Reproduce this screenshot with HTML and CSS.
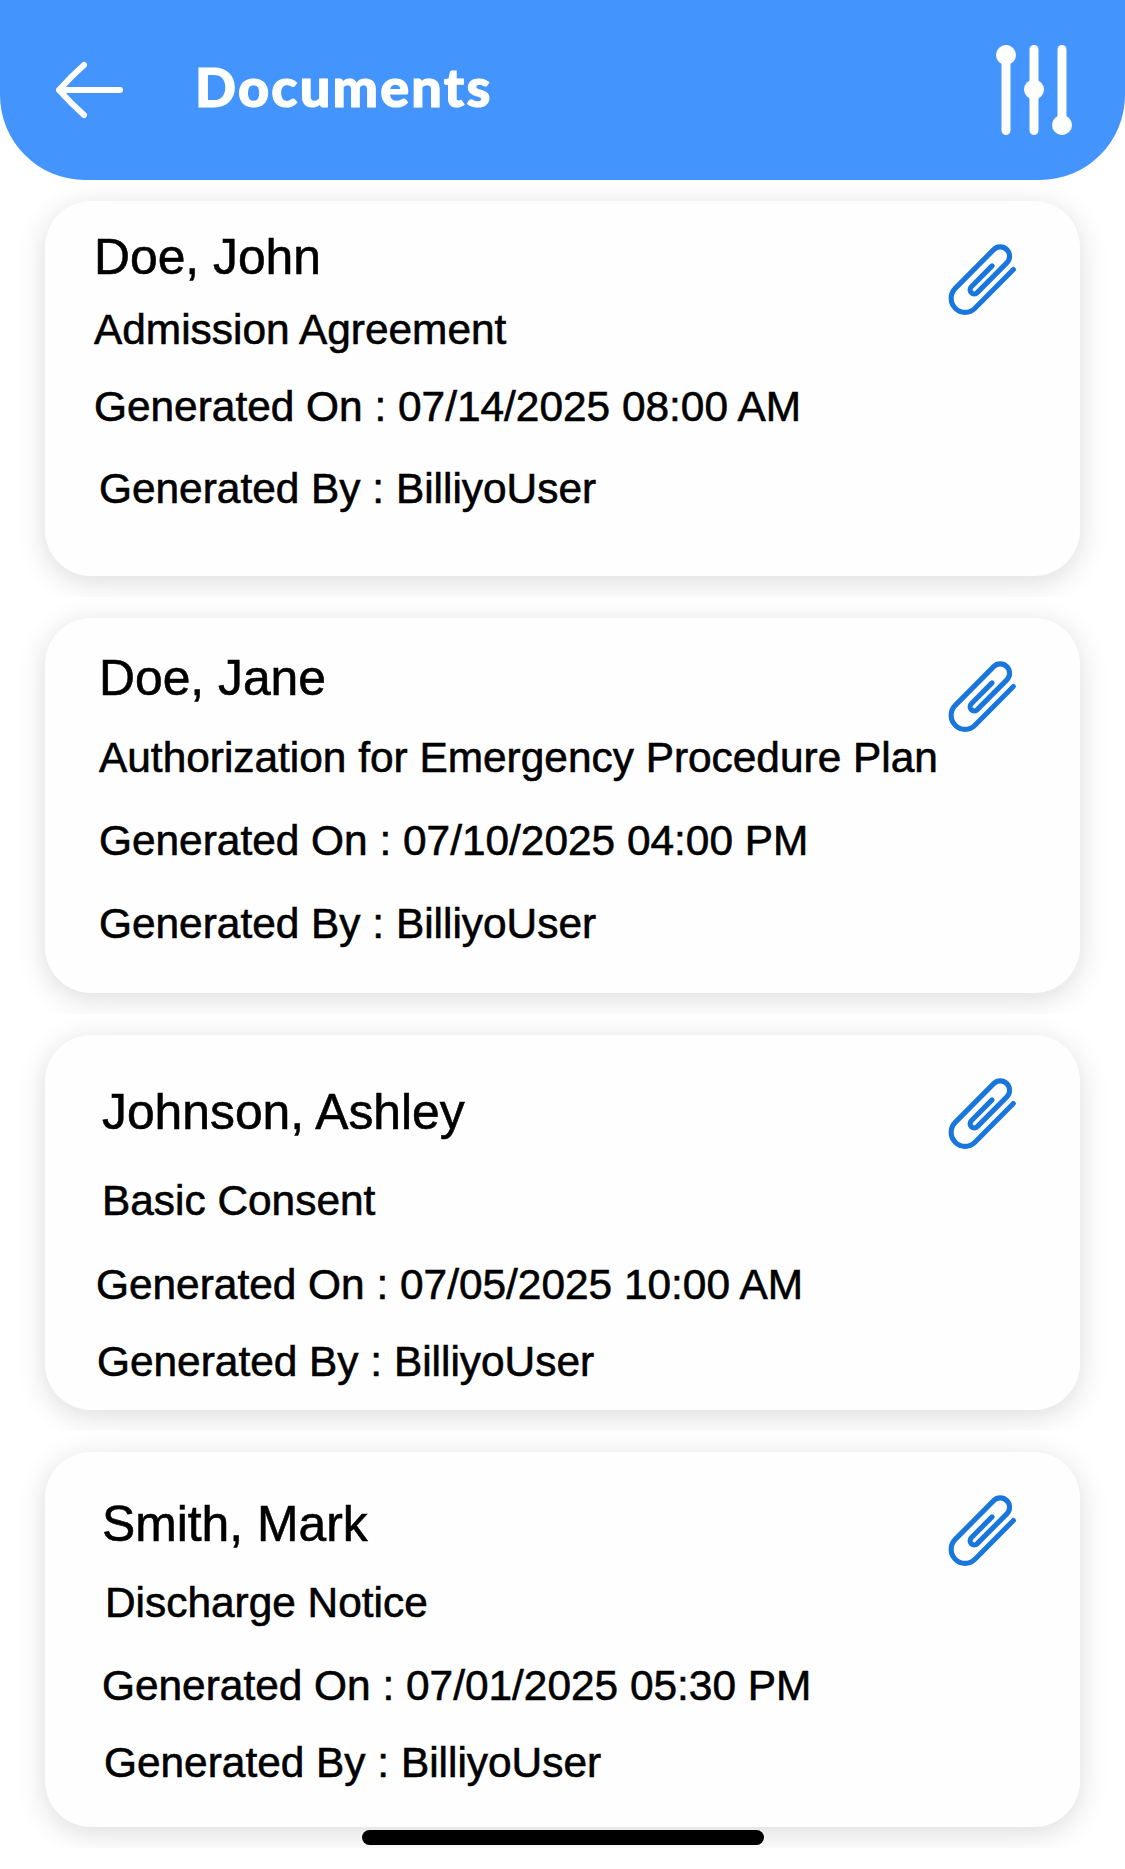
FILE: index.html
```html
<!DOCTYPE html>
<html lang="en">
<head>
    <meta charset="UTF-8">
    <title>Documents</title>
    <link rel="stylesheet" href="styles.css">
</head>
<body>
    <!-- shared icon -->
    <svg class="sprite" width="0" height="0">
        <symbol id="clip" viewBox="84 72 210 216" preserveAspectRatio="none">
            <path d="M218 138L155 201A12.7 12.7 0 0 0 173 219L263 129A28 28 0 0 0 223 89L106 206A42 42 0 0 0 166 266L283 149" fill="none" stroke="currentColor" stroke-width="15.5" stroke-linecap="round"/>
        </symbol>
    </svg>

    <header class="header">
        <svg class="back-icon" viewBox="0 0 70 60" fill="none" stroke="#fff" stroke-width="6" stroke-linecap="round" stroke-linejoin="round">
            <path d="M30 5C22 12 13 21 5 30C13 39 22 48 30 55M5 30H66"/>
        </svg>
        <h1 class="title">Documents</h1>
        <svg class="filter-icon" viewBox="0 0 78 92" fill="#fff">
            <rect x="6.5" y="1" width="9" height="90" rx="4.5"/>
            <rect x="34.5" y="1" width="9" height="90" rx="4.5"/>
            <rect x="62.5" y="1" width="9" height="90" rx="4.5"/>
            <circle cx="11" cy="11" r="10"/>
            <circle cx="39" cy="45.5" r="10"/>
            <circle cx="67" cy="81" r="10"/>
        </svg>
    </header>

    <main class="list">
        <div class="cell">
            <div class="card card-admission">
                <div class="info">
                    <h2 class="name">Doe, John</h2>
                    <p class="type">Admission Agreement</p>
                    <p class="date">Generated On : 07/14/2025 08:00 AM</p>
                    <p class="user">Generated By : BilliyoUser</p>
                </div>
                <svg class="clip-icon"><use href="#clip"/></svg>
            </div>
        </div>
        <div class="cell">
            <div class="card card-authorization">
                <div class="info">
                    <h2 class="name">Doe, Jane</h2>
                    <p class="type">Authorization for Emergency Procedure Plan</p>
                    <p class="date">Generated On : 07/10/2025 04:00 PM</p>
                    <p class="user">Generated By : BilliyoUser</p>
                </div>
                <svg class="clip-icon"><use href="#clip"/></svg>
            </div>
        </div>
        <div class="cell">
            <div class="card card-consent">
                <div class="info">
                    <h2 class="name">Johnson, Ashley</h2>
                    <p class="type">Basic Consent</p>
                    <p class="date">Generated On : 07/05/2025 10:00 AM</p>
                    <p class="user">Generated By : BilliyoUser</p>
                </div>
                <svg class="clip-icon"><use href="#clip"/></svg>
            </div>
        </div>
        <div class="cell">
            <div class="card card-discharge">
                <div class="info">
                    <h2 class="name">Smith, Mark</h2>
                    <p class="type">Discharge Notice</p>
                    <p class="date">Generated On : 07/01/2025 05:30 PM</p>
                    <p class="user">Generated By : BilliyoUser</p>
                </div>
                <svg class="clip-icon"><use href="#clip"/></svg>
            </div>
        </div>
    </main>

    <div class="home-indicator"></div>
</body>
</html>
```

FILE: styles.css
```css
* {
    box-sizing: border-box;
}
body {
    margin: 0;
    height: 1869px;
    background-color: #fff;
    color: #000;
    font-family: "Liberation Sans", Arial, sans-serif;
    overflow: hidden;
}
h1, h2, p {
    margin: 0;
    font-weight: normal;
}
.sprite {
    display: block;
}

/* header */
.header {
    display: flex;
    align-items: center;
    height: 180px;
    padding: 0 52px 0 54px;
    background-color: #4394fc;
    border-radius: 0 0 85px 85px;
}
.back-icon {
    width: 70px;
    height: 60px;
}
.title {
    flex: 1;
    margin-left: 71px;
    padding-bottom: 6px;
    color: #fff;
    font-family: Lato, sans-serif;
    font-size: 54px;
    font-weight: 900;
    line-height: 64px;
    letter-spacing: 2.2px;
    -webkit-text-stroke: 1.2px #fff;
}
.filter-icon {
    width: 78px;
    height: 92px;
}

/* document list */
.cell {
    height: 417px;
    padding: 21px 45px;
    overflow: hidden;
}
.card {
    display: flex;
    justify-content: space-between;
    height: 375px;
    padding: 0 63px 0 48px;
    background-color: #fefefe;
    border-radius: 46px;
    box-shadow: 0 6px 30px rgba(0, 0, 0, 0.14);
}
.clip-icon {
    flex: none;
    width: 69px;
    height: 71.5px;
    margin-top: 43px;
    color: #1876dd;
}
.info {
    font-size: 42.4px;
    line-height: 50px;
    white-space: nowrap;
    -webkit-text-stroke: 0.6px #000;
}
.name {
    font-size: 49.8px;
}

/* line spacing of each card */
.card-admission .name { margin: 31px 0 0 1px; }
.card-admission .type { margin: 23px 0 0 1px; }
.card-admission .date { margin: 27px 0 0 1px; }
.card-admission .user { margin: 32px 0 0 6px; }

.card-authorization .name { margin: 35px 0 0 6px; }
.card-authorization .type { margin: 30px 0 0 6px; }
.card-authorization .date { margin: 33px 0 0 6px; }
.card-authorization .user { margin: 33px 0 0 6px; }

.card-consent .name { margin: 52px 0 0 9px; }
.card-consent .type { margin: 39px 0 0 9px; }
.card-consent .date { margin: 34px 0 0 3px; }
.card-consent .user { margin: 27px 0 0 4px; }

.card-discharge .name { margin: 47px 0 0 9px; }
.card-discharge .type { margin: 29px 0 0 12px; }
.card-discharge .date { margin: 33px 0 0 9px; }
.card-discharge .user { margin: 27px 0 0 11px; }

.home-indicator {
    position: fixed;
    left: 362px;
    bottom: 24px;
    width: 402px;
    height: 15px;
    border-radius: 8px;
    background-color: #000;
}
```
